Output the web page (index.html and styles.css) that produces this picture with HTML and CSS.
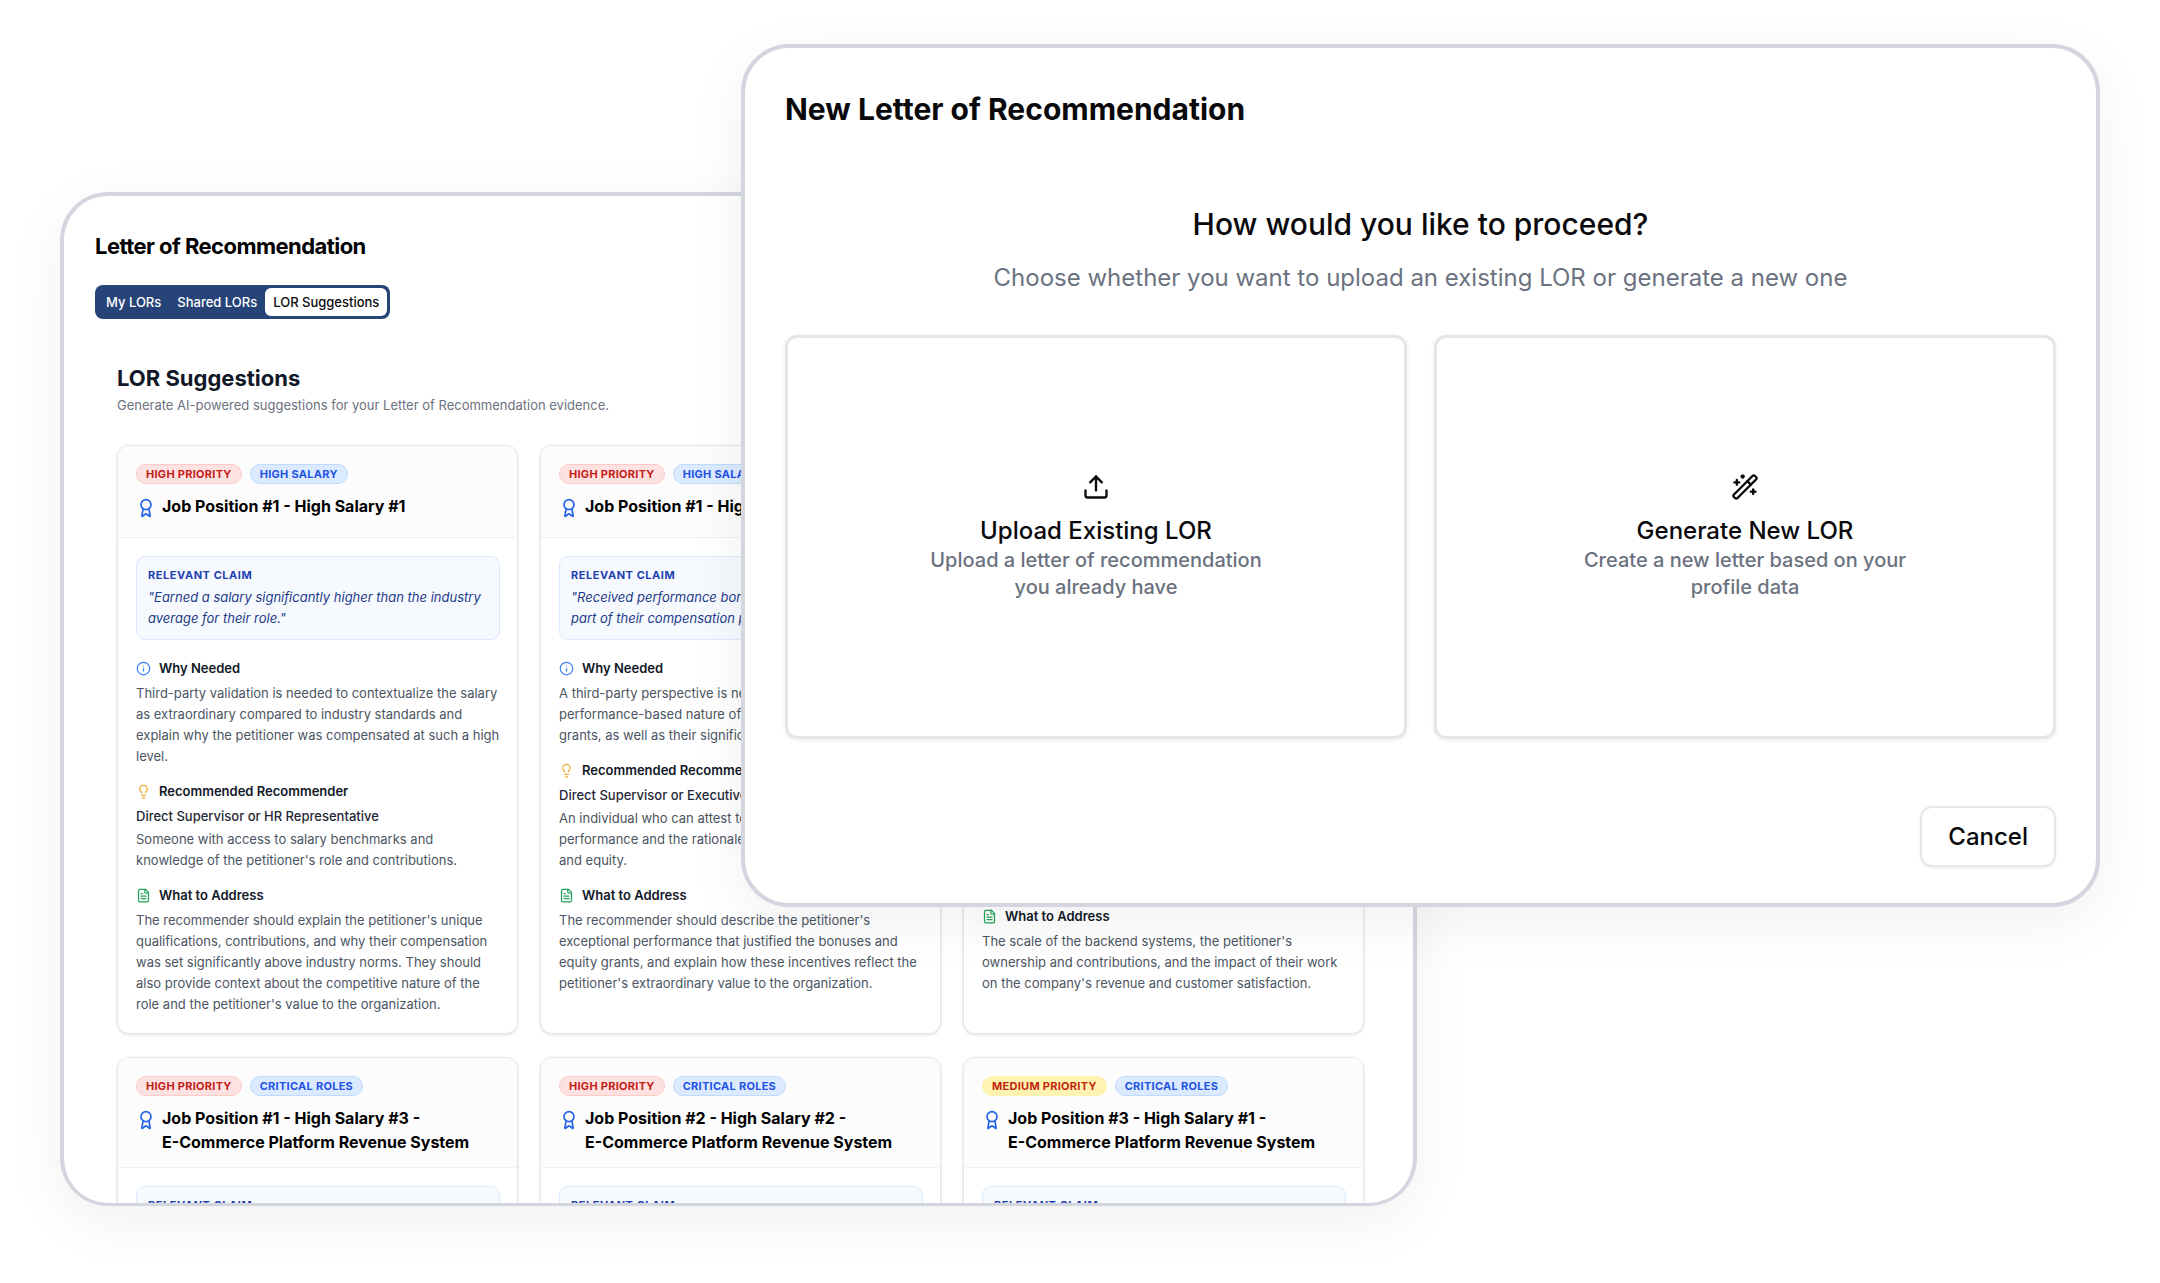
FILE: index.html
```html
<!DOCTYPE html>
<html lang="en">
<head>
    <meta charset="UTF-8">
    <meta name="viewport" content="width=device-width, initial-scale=1.0">
    <title>Letter of Recommendation</title>
    <link rel="stylesheet" href="styles.css">
</head>
<body>
    <!-- Shared icons -->
    <svg class="icon-sprite" aria-hidden="true">
        <symbol id="icon-award" viewBox="0 0 24 24">
            <path d="m15.477 12.89 1.515 8.526a.5.5 0 0 1-.81.47l-3.58-2.687a1 1 0 0 0-1.197 0l-3.586 2.686a.5.5 0 0 1-.81-.469l1.514-8.526"/>
            <circle cx="12" cy="8" r="6"/>
        </symbol>
        <symbol id="icon-info" viewBox="0 0 24 24">
            <circle cx="12" cy="12" r="10"/>
            <path d="M12 16v-4"/>
            <path d="M12 8h.01"/>
        </symbol>
        <symbol id="icon-bulb" viewBox="0 0 24 24">
            <path d="M15 14c.2-1 .7-1.7 1.5-2.5 1-.9 1.5-2.2 1.5-3.5A6 6 0 0 0 6 8c0 1 .2 2.2 1.5 3.5.7.7 1.3 1.5 1.5 2.5"/>
            <path d="M9 18h6"/>
            <path d="M10 22h4"/>
        </symbol>
        <symbol id="icon-file" viewBox="0 0 24 24">
            <path d="M15 2H6a2 2 0 0 0-2 2v16a2 2 0 0 0 2 2h12a2 2 0 0 0 2-2V7Z"/>
            <path d="M14 2v4a2 2 0 0 0 2 2h4"/>
            <path d="M10 9H8"/>
            <path d="M16 13H8"/>
            <path d="M16 17H8"/>
        </symbol>
        <symbol id="icon-upload" viewBox="0 0 24 24">
            <path d="M21 15v4a2 2 0 0 1-2 2H5a2 2 0 0 1-2-2v-4"/>
            <path d="m17 8-5-5-5 5"/>
            <path d="M12 3v12"/>
        </symbol>
        <symbol id="icon-wand" viewBox="0 0 24 24">
            <path d="m21.64 3.64-1.28-1.28a1.21 1.21 0 0 0-1.72 0L2.36 18.64a1.21 1.21 0 0 0 0 1.72l1.28 1.28a1.2 1.2 0 0 0 1.72 0L21.64 5.36a1.2 1.2 0 0 0 0-1.72"/>
            <path d="m14 7 3 3"/>
            <path d="M5 6v4"/>
            <path d="M19 14v4"/>
            <path d="M10 2v2"/>
            <path d="M7 8H3"/>
            <path d="M21 16h-4"/>
            <path d="M11 3H9"/>
        </symbol>
    </svg>

    <div class="stage">
        <main class="panel">
            <h1 class="panel-title">Letter of Recommendation</h1>
            <nav class="tabs">
                <button class="tab">My LORs</button>
                <button class="tab">Shared LORs</button>
                <button class="tab active">LOR Suggestions</button>
            </nav>

            <section class="suggestions">
                <h2>LOR Suggestions</h2>
                <p class="subtitle">Generate AI-powered suggestions for your Letter of Recommendation evidence.</p>

                <div class="card-grid">
                    <article class="card">
                        <header class="card-header">
                            <div class="badges">
                                <span class="badge high">HIGH PRIORITY</span>
                                <span class="badge topic">HIGH SALARY</span>
                            </div>
                            <div class="card-title">
                                <svg class="icon award"><use href="#icon-award"/></svg>
                                <h3>Job Position #1 - High Salary #1</h3>
                            </div>
                        </header>
                        <div class="card-body">
                            <div class="claim">
                                <h4>RELEVANT CLAIM</h4>
                                <p>"Earned a salary significantly higher than the industry average for their role."</p>
                            </div>
                            <div class="detail">
                                <h4><svg class="icon info"><use href="#icon-info"/></svg>Why Needed</h4>
                                <p>Third-party validation is needed to contextualize the salary as extraordinary compared to industry standards and explain why the petitioner was compensated at such a high level.</p>
                            </div>
                            <div class="detail">
                                <h4><svg class="icon bulb"><use href="#icon-bulb"/></svg>Recommended Recommender</h4>
                                <p class="role">Direct Supervisor or HR Representative</p>
                                <p>Someone with access to salary benchmarks and knowledge of the petitioner's role and contributions.</p>
                            </div>
                            <div class="detail">
                                <h4><svg class="icon file"><use href="#icon-file"/></svg>What to Address</h4>
                                <p>The recommender should explain the petitioner's unique qualifications, contributions, and why their compensation was set significantly above industry norms. They should also provide context about the competitive nature of the role and the petitioner's value to the organization.</p>
                            </div>
                        </div>
                    </article>

                    <article class="card">
                        <header class="card-header">
                            <div class="badges">
                                <span class="badge high">HIGH PRIORITY</span>
                                <span class="badge topic">HIGH SALARY</span>
                            </div>
                            <div class="card-title">
                                <svg class="icon award"><use href="#icon-award"/></svg>
                                <h3>Job Position #1 - High Salary #2</h3>
                            </div>
                        </header>
                        <div class="card-body">
                            <div class="claim">
                                <h4>RELEVANT CLAIM</h4>
                                <p>"Received performance bonuses and equity grants as part of their compensation package."</p>
                            </div>
                            <div class="detail">
                                <h4><svg class="icon info"><use href="#icon-info"/></svg>Why Needed</h4>
                                <p>A third-party perspective is needed to explain the performance-based nature of the bonuses and equity grants, as well as their significance.</p>
                            </div>
                            <div class="detail">
                                <h4><svg class="icon bulb"><use href="#icon-bulb"/></svg>Recommended Recommender</h4>
                                <p class="role">Direct Supervisor or Executive</p>
                                <p>An individual who can attest to the petitioner's performance and the rationale behind the annual bonuses and equity.</p>
                            </div>
                            <div class="detail">
                                <h4><svg class="icon file"><use href="#icon-file"/></svg>What to Address</h4>
                                <p>The recommender should describe the petitioner's exceptional performance that justified the bonuses and equity grants, and explain how these incentives reflect the petitioner's extraordinary value to the organization.</p>
                            </div>
                        </div>
                    </article>

                    <article class="card">
                        <header class="card-header">
                            <div class="badges">
                                <span class="badge high">HIGH PRIORITY</span>
                                <span class="badge topic">CRITICAL ROLES</span>
                            </div>
                            <div class="card-title">
                                <svg class="icon award"><use href="#icon-award"/></svg>
                                <h3>Job Position #2 - High Salary #1</h3>
                            </div>
                        </header>
                        <div class="card-body">
                            <div class="claim">
                                <h4>RELEVANT CLAIM</h4>
                                <p>"Led the design of the backend systems that support the company's main product."</p>
                            </div>
                            <div class="detail">
                                <h4><svg class="icon info"><use href="#icon-info"/></svg>Why Needed</h4>
                                <p>An outside account is needed to show that the role was critical to the company, that the systems were built under the petitioner's lead, and that the results could not have been reached without their work.</p>
                            </div>
                            <div class="detail">
                                <h4><svg class="icon bulb"><use href="#icon-bulb"/></svg>Recommended Recommender</h4>
                                <p class="role">Chief Technology Officer</p>
                                <p>A senior leader who oversaw the engineering team and can speak to the petitioner's ownership of the backend systems and their results.</p>
                            </div>
                            <div class="detail">
                                <h4><svg class="icon file"><use href="#icon-file"/></svg>What to Address</h4>
                                <p>The scale of the backend systems, the petitioner's ownership and contributions, and the impact of their work on the company's revenue and customer satisfaction.</p>
                            </div>
                        </div>
                    </article>

                    <article class="card">
                        <header class="card-header">
                            <div class="badges">
                                <span class="badge high">HIGH PRIORITY</span>
                                <span class="badge topic">CRITICAL ROLES</span>
                            </div>
                            <div class="card-title">
                                <svg class="icon award"><use href="#icon-award"/></svg>
                                <h3>Job Position #1 - High Salary #3 -<br>E-Commerce Platform Revenue System</h3>
                            </div>
                        </header>
                        <div class="card-body">
                            <div class="claim">
                                <h4>RELEVANT CLAIM</h4>
                            </div>
                        </div>
                    </article>

                    <article class="card">
                        <header class="card-header">
                            <div class="badges">
                                <span class="badge high">HIGH PRIORITY</span>
                                <span class="badge topic">CRITICAL ROLES</span>
                            </div>
                            <div class="card-title">
                                <svg class="icon award"><use href="#icon-award"/></svg>
                                <h3>Job Position #2 - High Salary #2 -<br>E-Commerce Platform Revenue System</h3>
                            </div>
                        </header>
                        <div class="card-body">
                            <div class="claim">
                                <h4>RELEVANT CLAIM</h4>
                            </div>
                        </div>
                    </article>

                    <article class="card">
                        <header class="card-header">
                            <div class="badges">
                                <span class="badge medium">MEDIUM PRIORITY</span>
                                <span class="badge topic">CRITICAL ROLES</span>
                            </div>
                            <div class="card-title">
                                <svg class="icon award"><use href="#icon-award"/></svg>
                                <h3>Job Position #3 - High Salary #1 -<br>E-Commerce Platform Revenue System</h3>
                            </div>
                        </header>
                        <div class="card-body">
                            <div class="claim">
                                <h4>RELEVANT CLAIM</h4>
                            </div>
                        </div>
                    </article>
                </div>
            </section>
        </main>

        <!-- New LOR dialog -->
        <div class="dialog" role="dialog" aria-labelledby="dialogTitle">
            <h2 class="dialog-title" id="dialogTitle">New Letter of Recommendation</h2>
            <div class="dialog-intro">
                <h3>How would you like to proceed?</h3>
                <p>Choose whether you want to upload an existing LOR or generate a new one</p>
            </div>
            <div class="options">
                <button class="option">
                    <svg class="icon"><use href="#icon-upload"/></svg>
                    <span class="option-name">Upload Existing LOR</span>
                    <span class="option-text">Upload a letter of recommendation you already have</span>
                </button>
                <button class="option">
                    <svg class="icon"><use href="#icon-wand"/></svg>
                    <span class="option-name">Generate New LOR</span>
                    <span class="option-text">Create a new letter based on your profile data</span>
                </button>
            </div>
            <div class="dialog-footer">
                <button class="cancel-button">Cancel</button>
            </div>
        </div>
    </div>
</body>
</html>
```
FILE: styles.css
```css
* {
    box-sizing: border-box;
}

body {
    margin: 0;
    font-family: Inter, "Liberation Sans", sans-serif;
    background: #fff;
    color: #09090b;
}

h1, h2, h3, h4, p {
    margin: 0;
}

button {
    font-family: inherit;
    cursor: pointer;
}

.icon-sprite {
    display: none;
}

.icon {
    flex-shrink: 0;
    fill: none;
    stroke: currentColor;
    stroke-width: 2;
    stroke-linecap: round;
    stroke-linejoin: round;
}

.stage {
    position: relative;
    height: 100vh;
    padding: 192px 60px 77px;
    overflow: hidden;
}

/* Back panel */
.panel {
    width: 67%;
    max-width: 1357px;
    height: 100%;
    padding: 34px 49px 0 31px;
    border: 4px solid #d3d6df;
    border-bottom-width: 3px;
    border-radius: 48px;
    background: #fff;
    box-shadow: 0 16px 60px rgba(0, 0, 0, 0.06);
    overflow: hidden;
}

.panel-title {
    font-size: 22px;
    line-height: 32px;
    font-weight: 700;
    letter-spacing: -0.025em;
    color: #000;
}

.tabs {
    display: flex;
    width: max-content;
    margin-top: 23px;
    padding: 3px;
    border-radius: 8px;
    background: #264478;
}

.tab {
    height: 28px;
    padding: 0 8px;
    border: none;
    border-radius: 6px;
    background: none;
    color: #fff;
    font-size: 13px;
    font-weight: 500;
}

.tab.active {
    background: #fff;
    color: #09090b;
}

.suggestions {
    margin: 43px 0 0 22px;
}

.suggestions h2 {
    font-size: 22px;
    line-height: 32px;
    font-weight: 700;
    color: #111827;
}

.subtitle {
    margin-top: 1px;
    font-size: 13px;
    line-height: 20px;
    color: #6b7280;
}

.card-grid {
    display: grid;
    grid-template-columns: repeat(3, 1fr);
    gap: 23px 22px;
    margin-top: 30px;
}

/* Suggestion card */
.card {
    border: 1px solid #e5e7eb;
    border-radius: 12px;
    background: #fff;
    box-shadow: 0 1px 3px rgba(0, 0, 0, 0.12);
    overflow: hidden;
}

.card-header {
    padding: 18px 18px 13px;
    border-bottom: 1px solid #f0f1f3;
    background: #fcfcfc;
}

.badges {
    display: flex;
    gap: 8px;
}

.badge {
    padding: 0 9px;
    border: 1px solid;
    border-radius: 10px;
    font-size: 11px;
    line-height: 18px;
    font-weight: 700;
    letter-spacing: 0.025em;
}

.badge.high {
    background: #fee2e2;
    border-color: #fecaca;
    color: #c32017;
}

.badge.medium {
    background: #fef3b0;
    border-color: #fef3b0;
    color: #c2260c;
}

.badge.topic {
    background: #dbeafe;
    border-color: #bfdbfe;
    color: #2152e5;
}

.card-title {
    display: flex;
    gap: 6px;
    margin-top: 10px;
}

.card-title h3 {
    font-size: 16px;
    line-height: 24px;
    font-weight: 700;
    color: #000;
}

.award {
    width: 20px;
    height: 20px;
    margin: 4px 0 6px;
    color: #2563eb;
}

.card-body {
    padding: 18px 17px 18px 18px;
}

.claim {
    padding: 8px 11px 10px;
    margin-bottom: 18px;
    border: 1px solid #dbeafe;
    border-radius: 9px;
    background: #f6faff;
}

.claim h4 {
    font-size: 11px;
    line-height: 20px;
    font-weight: 700;
    letter-spacing: 0.05em;
    color: #1e40af;
}

.claim p {
    margin-top: 2px;
    font-size: 13px;
    line-height: 21px;
    font-style: italic;
    color: #1e3a8a;
}

.detail + .detail {
    margin-top: 14px;
}

.detail h4 {
    display: flex;
    align-items: center;
    gap: 8px;
    margin-bottom: 5px;
    font-size: 13px;
    line-height: 20px;
    font-weight: 600;
    color: #111827;
}

.detail h4 .icon {
    width: 15px;
    height: 15px;
}

.info {
    color: #3b82f6;
}

.bulb {
    color: #f0a92e;
}

.file {
    color: #22a559;
}

.detail p {
    font-size: 13px;
    line-height: 21px;
    color: #4b5563;
}

.detail .role {
    margin-bottom: 3px;
    line-height: 20px;
    font-weight: 500;
    color: #1f2937;
}

/* Dialog */
.dialog {
    position: absolute;
    top: 44px;
    right: 60px;
    width: 63%;
    max-width: 1359px;
    padding: 43px 40px 36px;
    border: 4px solid #d3d6df;
    border-radius: 48px;
    background: #fff;
    box-shadow: 0 16px 60px rgba(0, 0, 0, 0.06);
}

.dialog-title {
    font-size: 30px;
    line-height: 36px;
    font-weight: 700;
}

.dialog-intro {
    margin-top: 79px;
    text-align: center;
}

.dialog-intro h3 {
    font-size: 30px;
    line-height: 36px;
    font-weight: 500;
}

.dialog-intro p {
    margin-top: 20px;
    font-size: 24px;
    line-height: 32px;
    color: #6b7280;
}

.options {
    display: grid;
    grid-template-columns: 1fr 1fr;
    gap: 27px;
    margin-top: 41px;
}

.option {
    display: flex;
    flex-direction: column;
    align-items: center;
    justify-content: center;
    min-height: 404px;
    border: 3px solid #e4e6e8;
    border-radius: 12px;
    background: #fff;
    box-shadow: 0 1px 4px rgba(0, 0, 0, 0.08);
    color: #09090b;
}

.option .icon {
    width: 28px;
    height: 28px;
    margin-bottom: 14px;
}

.option-name {
    font-size: 24px;
    line-height: 32px;
    font-weight: 500;
}

.option-text {
    max-width: 360px;
    font-size: 20px;
    line-height: 27px;
    font-weight: 500;
    color: #6b7280;
}

.dialog-footer {
    display: flex;
    justify-content: flex-end;
    margin-top: 67px;
}

.cancel-button {
    height: 61px;
    padding: 0 26px;
    border: 2px solid #e5e7eb;
    border-radius: 12px;
    background: #fff;
    box-shadow: 0 1px 3px rgba(0, 0, 0, 0.08);
    color: #09090b;
    font-size: 24px;
    font-weight: 500;
}
```
